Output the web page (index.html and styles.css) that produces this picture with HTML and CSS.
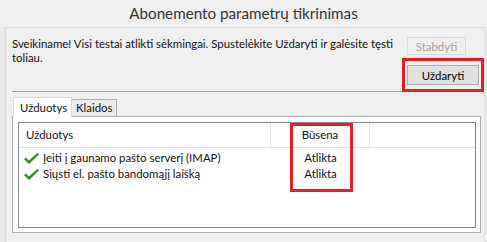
FILE: index.html
```html
<!DOCTYPE html>
<html lang="lt">
<head>
  <meta charset="UTF-8" />
  <title>Abonemento parametrų tikrinimas</title>
  <link rel="stylesheet" href="styles.css">
</head>
<body>
  <div class="title">Abonemento parametrų tikrinimas</div>
  <div class="panel">
    <div class="top">
      <div class="message">Sveikiname! Visi testai atlikti sėkmingai. Spustelėkite Uždaryti ir galėsite tęsti<br>toliau.</div>
      <div class="actions">
        <button class="btn btn-stop" disabled>Stabdyti</button>
        <div class="mark">
          <button class="btn btn-close">Uždaryti</button>
        </div>
      </div>
    </div>

    <div class="tabs">
      <div class="tab active">Užduotys</div>
      <div class="tab">Klaidos</div>
    </div>
    <div class="tab-panel">
      <div class="list">
        <div class="row head">
          <div class="cell c-task">Užduotys</div>
          <div class="cell c-status">Būsena</div>
          <div class="cell c-rest"></div>
        </div>
        <div class="rows">
          <div class="row">
            <div class="cell c-task">
              <svg class="check" width="15" height="11" viewBox="0 0 15 11"><polygon points="0,6.2 1.8,4.6 5,7.6 13.2,0 15,1.4 5,11" fill="#2f8f2a"/></svg>
              Įeiti į gaunamo pašto serverį (IMAP)
            </div>
            <div class="cell c-status">Atlikta</div>
          </div>
          <div class="row">
            <div class="cell c-task">
              <svg class="check" width="15" height="11" viewBox="0 0 15 11"><polygon points="0,6.2 1.8,4.6 5,7.6 13.2,0 15,1.4 5,11" fill="#2f8f2a"/></svg>
              Siųsti el. pašto bandomąjį laišką
            </div>
            <div class="cell c-status">Atlikta</div>
          </div>
        </div>
        <div class="col-mark"></div>
      </div>
    </div>
  </div>
</body>
</html>
```

FILE: styles.css
```css
:root {
  --bg: #f0f0f0;
  --text: #111;
  --mark: #ed1c24;
}

body {
  margin: 0;
  background-color: #ebebeb;
  color: var(--text);
  font-family: 'Lato', sans-serif;
  font-size: 11.4px;
}

.title {
  height: 27px;
  line-height: 27px;
  text-align: center;
  font-size: 15.2px;
  color: #333;
  background-color: var(--bg);
}

.panel {
  margin-left: 5px;
  width: 480px;
  height: 215px;
  box-sizing: border-box;
  background-color: var(--bg);
  border-top: 1px solid #dcdcdc;
  border-left: 1px solid #dcdcdc;
  border-right: 1px solid #e2e2e2;
  padding-left: 6px;
}

.top {
  display: flex;
}

.message {
  width: 391px;
  box-sizing: border-box;
  padding-top: 9px;
  line-height: 14px;
  white-space: nowrap;
  border-bottom: 1px solid #a0a0a0;
}

.actions {
  margin-top: 9px;
  display: flex;
  flex-direction: column;
  align-items: flex-start;
}

.btn {
  font-family: inherit;
  font-size: 11.4px;
  padding: 0;
  box-sizing: border-box;
}

.btn-stop {
  margin-left: 5px;
  margin-bottom: 3px;
  width: 59px;
  height: 18px;
  background-color: #f0f0f0;
  border: 1px solid #d9d9d9;
  color: #a0a0a0;
}

.mark {
  border: 3px solid var(--mark);
  padding: 4px 2px;
}

.btn-close {
  width: 72px;
  height: 20px;
  background-color: #e1e1e1;
  border: 1px solid #adadad;
  color: #000;
}

.tabs {
  margin-top: 5px;
  margin-left: 1px;
  display: flex;
  align-items: flex-end;
}

.tab {
  box-sizing: border-box;
  height: 17px;
  padding: 0 4px;
  line-height: 16px;
  border: 1px solid #adadad;
  border-bottom: none;
  background-color: #ececec;
}

.tab.active {
  position: relative;
  z-index: 1;
  height: 20px;
  width: 59px;
  margin-bottom: -1px;
  line-height: 19px;
  padding-left: 6px;
  border-color: #d9d9d9;
  background-color: #fff;
}

.tab + .tab {
  min-width: 41px;
  border-left: none;
}

.tab-panel {
  width: 469px;
  height: 117px;
  box-sizing: border-box;
  border: 1px solid #adadad;
  background-color: #fff;
  padding: 5px 4px 4px 5px;
}

.list {
  position: relative;
  height: 106px;
  box-sizing: border-box;
  border: 1px solid #828790;
  background-color: #fff;
}

.row {
  display: flex;
  height: 16px;
  line-height: 16px;
}

.row.head {
  height: 25px;
  line-height: 24px;
  border-bottom: 1px solid #e5e5e5;
  box-sizing: border-box;
}

.rows {
  padding-top: 2px;
}

.cell {
  box-sizing: border-box;
  white-space: nowrap;
}

.c-task {
  width: 252px;
  padding-left: 5px;
  display: flex;
  align-items: center;
}

.head .c-task {
  padding-left: 7px;
  border-right: 1px solid #e5e5e5;
}

.check {
  margin-right: 4px;
  flex: none;
}

.c-status {
  width: 99px;
  text-align: center;
}

.head .c-status {
  border-right: 1px solid #e5e5e5;
}

.c-rest {
  flex: 1;
}

.col-mark {
  position: absolute;
  left: 271px;
  top: 0;
  width: 63px;
  height: 69px;
  box-sizing: border-box;
  border: 3px solid var(--mark);
}
```
